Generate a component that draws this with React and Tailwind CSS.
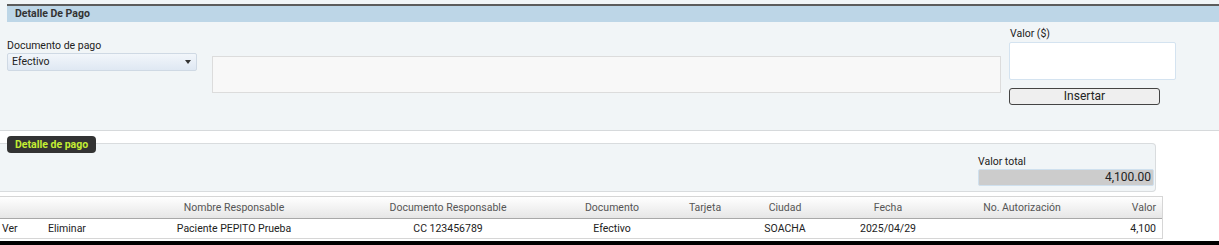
const columns = [
  { label: "", width: "w-[45px]", align: "text-left pl-[2px]" },
  { label: "", width: "w-[85px]", align: "text-left pl-[3px]" },
  { label: "Nombre Responsable", width: "w-[208px]", align: "text-center" },
  { label: "Documento Responsable", width: "w-[220px]", align: "text-center" },
  { label: "Documento", width: "w-[108px]", align: "text-center" },
  { label: "Tarjeta", width: "w-[78px]", align: "text-center" },
  { label: "Ciudad", width: "w-[82px]", align: "text-center" },
  { label: "Fecha", width: "w-[124px]", align: "text-center" },
  { label: "No. Autorización", width: "w-[144px]", align: "text-center" },
  { label: "Valor", width: "flex-1", align: "text-right pr-[6px]" }
];

const row = [
  "Ver",
  "Eliminar",
  "Paciente PEPITO Prueba",
  "CC 123456789",
  "Efectivo",
  "",
  "SOACHA",
  "2025/04/29",
  "",
  "4,100"
];

export default function App() {
  return (
    <div className="flex h-[245px] w-[1219px] flex-col overflow-hidden bg-white font-['Roboto','Liberation_Sans',sans-serif] text-[10.5px] text-[#222]">
      {/* captura */}
      <section className="h-[131px] shrink-0 border-b border-[#d6d9db] bg-[#f1f5f7] pt-[4px]">
        <div className="ml-[7px] h-[18px] border-t-2 border-[#5c5c5c] bg-[#bdd6e7] pl-[8px] text-[10.5px] font-bold leading-[16px] text-[#333]">
          Detalle De Pago
        </div>
        <div className="flex items-start">
          <div className="ml-[7px] mt-[17px] w-[190px]">
            <p className="leading-[13px]">Documento de pago</p>
            <div className="mt-[1px] flex h-[18px] items-center justify-between rounded-[2px] border border-[#cfd9e4] bg-gradient-to-b from-[#f2f6fb] to-[#dfe8f3] pl-[4px] pr-[5px]">
              <span>Efectivo</span>
              <span className="h-0 w-0 border-x-[3px] border-t-[4px] border-x-transparent border-t-[#333]" />
            </div>
          </div>
          <div className="ml-[15px] mt-[34px] h-[37px] w-[789px] border border-[#dcdcdc] bg-[#f8f8f8]" />
          <div className="ml-[8px] mt-[5px] w-[167px]">
            <p className="pl-[1px] leading-[13px]">Valor ($)</p>
            <div className="mt-[2px] h-[38px] rounded-[2px] border border-[#d4e3f0] bg-white" />
            <button className="mt-[8px] h-[17px] w-[151px] rounded-[3px] border border-[#444] bg-[#efefef] text-[12px] leading-[15px] text-[#222]">
              Insertar
            </button>
          </div>
        </div>
      </section>

      {/* detalle */}
      <div className="relative mt-[12px] h-[49px] w-[1156px] shrink-0 rounded-r-[4px] border border-l-0 border-[#d9dcde] bg-[#f1f5f7]">
        <span className="absolute left-[7px] top-[-8px] h-[17px] rounded-[4px] bg-[#333] px-[8px] text-[10.5px] font-bold leading-[17px] text-[#c4ee33]">
          Detalle de pago
        </span>
        <div className="ml-auto mr-[1px] mt-[11px] w-[176px]">
          <p className="leading-[13px]">Valor total</p>
          <div className="mt-[1px] h-[17px] rounded-[2px] border border-[#cfe0ee] bg-[#cccccc] pr-[2px] text-right text-[12px] leading-[15px] text-[#222]">
            4,100.00
          </div>
        </div>
      </div>

      <div className="mt-[4px] w-[1163px] shrink-0 border-r border-t border-[#d6d6d6] text-[10.5px]">
        <div className="flex h-[22px] items-center border-b border-[#a8a8a8] bg-gradient-to-b from-white to-[#e6e6e6] text-[#555]">
          {columns.map((c, i) => (
            <div key={i} className={`${c.width} ${c.align} shrink-0`}>
              {c.label}
            </div>
          ))}
        </div>
        <div className="flex h-[20px] items-center border-b border-[#d6d6d6]">
          {columns.map((c, i) => (
            <div key={i} className={`${c.width} ${c.align} shrink-0`}>
              {row[i]}
            </div>
          ))}
        </div>
      </div>

      <div className="mt-auto h-[4px] bg-black" />
    </div>
  );
}
